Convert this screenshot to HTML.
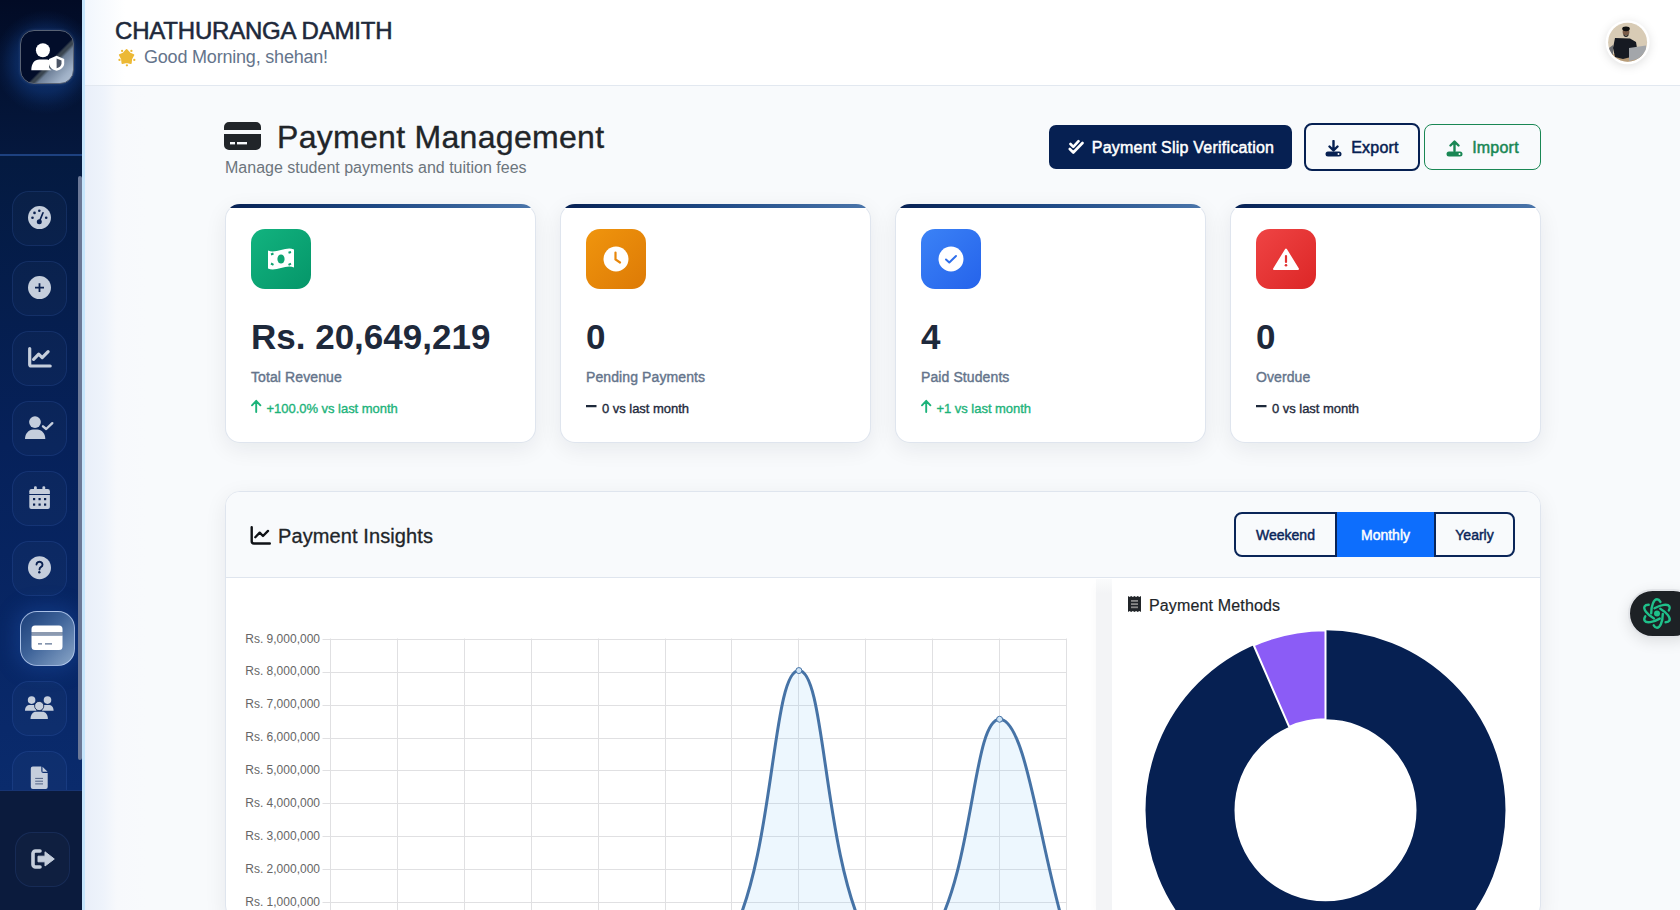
<!DOCTYPE html>
<html>
<head>
<meta charset="utf-8">
<style>
*{box-sizing:border-box;margin:0;padding:0}
html,body{width:1680px;height:910px;overflow:hidden;font-family:"Liberation Sans",sans-serif;background:#f8fafc}
.abs{position:absolute}
#sidebar{position:absolute;left:0;top:0;width:82px;height:910px;background:linear-gradient(180deg,#041838 0%,#041a40 17%,#06215a 49%,#09296a 80%,#0a2b6c 87%);overflow:hidden}
#sb-top{position:absolute;left:0;top:0;width:82px;height:155px;background:radial-gradient(circle at 46px 62px,rgba(25,85,180,.55) 0,rgba(25,85,180,.32) 30px,rgba(25,85,180,.08) 44px,rgba(25,85,180,0) 52px),linear-gradient(180deg,#020b25 0,#031232 50%,#05183e 100%)}
#sb-div{position:absolute;left:0;top:154px;width:82px;height:2px;background:#1d4180}
#sb-bottom{position:absolute;left:0;top:789.5px;width:82px;height:121px;background:#0b1b3d;border-top:1.5px solid #173472}
.logo{position:absolute;left:20px;top:30px;width:54px;height:54px;border-radius:14px;border:1.5px solid #586274;background:linear-gradient(135deg,#020d2a 0%,#020d2a 56%,#3a4550 59%,#3a4550 62%,#6e8098 66%,#9fb0c6 85%,#b4c3d6 100%);box-shadow:0 0 3px rgba(120,150,200,.3)}
.nav{position:absolute;left:12px;width:55px;height:55px;border-radius:17px;background:rgba(255,255,255,.025);border:1px solid rgba(70,120,220,.16)}
.nav svg{position:absolute;left:50%;top:50%;transform:translate(-50%,-50%)}
.nav.active{left:20px;background:linear-gradient(135deg,#1b3e78 0%,#3e6399 45%,#8aa6c8 100%);border:1px solid rgba(200,220,255,.7);box-shadow:0 0 20px 5px rgba(40,100,200,.28)}
#scroll{position:absolute;left:78px;top:176px;width:4px;height:584px;background:#6b7897;border-radius:2px}
#blue-strip{position:absolute;left:82px;top:0;width:3px;height:910px;background:#c6e5fc}
#header{position:absolute;left:85px;top:0;width:1595px;height:86px;background:linear-gradient(90deg,#f1f6fd 0,#fff 40px);border-bottom:1px solid #e2e8f0}
#main{position:absolute;left:85px;top:86px;width:1595px;height:824px;background:linear-gradient(90deg,#e9eff9 0,#eef3fb 18px,#f7f9fc 32px,#f8fafc 60px)}
.name{position:absolute;left:115px;top:17px;font-size:24px;font-weight:normal;-webkit-text-stroke:0.55px #1e293b;color:#1e293b;white-space:nowrap;letter-spacing:-0.2px}
.greet{position:absolute;left:144px;top:47px;letter-spacing:-0.2px;font-size:18px;color:#64748b;white-space:nowrap}


.title{position:absolute;left:277px;top:118.5px;letter-spacing:0.3px;-webkit-text-stroke:0.35px #212529;font-size:32px;color:#212529;white-space:nowrap}
.subtitle{position:absolute;left:225px;top:159px;font-size:16px;color:#6c757d;white-space:nowrap}
.btn{position:absolute;display:flex;align-items:center;justify-content:center;font-weight:normal;-webkit-text-stroke:0.5px currentColor;font-size:16px;letter-spacing:0.22px;white-space:nowrap;padding-top:2.5px}
.btn1{left:1049px;top:125px;width:243px;height:44px;background:#062052;color:#fff;border-radius:7px}
.btn2{left:1304px;top:123px;width:116px;height:48px;border:2px solid #062052;color:#062052;border-radius:8px;background:#f8fafc}
.btn3{left:1424px;top:124px;width:117px;height:46px;border:1px solid #198754;color:#198754;border-radius:8px;background:#f8fafc}
.card{position:absolute;top:204px;width:310.5px;height:238.5px;background:linear-gradient(90deg,#062052 0%,#1f4a86 50%,#4b76ab 100%) 0 0/100% 4px no-repeat border-box,#fff;border-radius:15px;border:1px solid #dfe5ee;border-top-color:transparent;box-shadow:0 6px 22px rgba(15,23,42,.075);overflow:hidden}
.card .ic{position:absolute;left:25px;top:24px;width:60px;height:60px;border-radius:14px}
.card .ic svg{position:absolute;left:50%;top:50%;transform:translate(-50%,-50%)}
.card .val{position:absolute;left:25px;top:112px;font-size:35px;font-weight:bold;color:#1e293b;white-space:nowrap}
.card .lbl{position:absolute;left:25px;top:164px;letter-spacing:0.1px;-webkit-text-stroke:0.4px currentColor;font-size:14px;font-weight:normal;color:#64748b;white-space:nowrap}
.card .chg{position:absolute;left:25px;top:196px;letter-spacing:-0.03px;-webkit-text-stroke:0.35px currentColor;font-size:13px;font-weight:normal;white-space:nowrap;display:flex;align-items:center}
.up{color:#1cb37a}
.flat{color:#1e293b}

.panel{position:absolute;left:225px;top:491px;width:1315.5px;height:430px;background:#fff;border-radius:15px;border:1px solid #dfe5ee;box-shadow:0 6px 22px rgba(15,23,42,.075);overflow:hidden}
.panel .ph{position:absolute;left:0;top:0;width:100%;height:86px;background:#f8fafc;border-bottom:1px solid #dfe5ee}
.ptitle{position:absolute;left:278px;top:525px;letter-spacing:0.1px;-webkit-text-stroke:0.3px #212529;font-size:20px;font-weight:normal;color:#212529;white-space:nowrap}
.tog{position:absolute;left:1234px;top:512px;width:281px;height:44.5px;display:flex}
.tog div{height:100%;display:flex;align-items:center;justify-content:center;padding-top:2px;font-size:14px;font-weight:normal;-webkit-text-stroke:0.45px currentColor;color:#0a2558;border:2px solid #0a2558;background:#f8fafc}
.tog .on{background:#0d6efd;color:#fff;border-color:#0d6efd}
.gap{position:absolute;left:1096px;top:579px;width:16px;height:340px;background:linear-gradient(180deg,#fafbfc 0,#f3f4f6 14px);box-shadow:-6px 0 8px -6px rgba(0,0,0,.04)}
.pm{position:absolute;left:1149px;top:596.5px;letter-spacing:0.15px;-webkit-text-stroke:0.2px #212529;font-size:16px;color:#212529;white-space:nowrap}
.ylab{position:absolute;font-size:12px;color:#666;white-space:nowrap;text-align:right;width:100px}
.fab{position:absolute;left:1628px;top:589px;width:70px;height:48.5px;border-radius:25px;background:#1d2125;border:2.5px solid #e2e4e8;box-shadow:0 4px 14px rgba(0,0,0,.10)}
</style>
</head>
<body>
<div id="header"></div>
<div id="main"></div>
<div id="sidebar">
  <div id="sb-top"></div>
  <div id="sb-div"></div>
  <div class="logo"></div>
  <div class="nav" style="top:191px"></div><div class="nav" style="top:261px"></div><div class="nav" style="top:331px"></div><div class="nav" style="top:401px"></div><div class="nav" style="top:471px"></div><div class="nav" style="top:541px"></div><div class="nav active" style="top:611px"></div><div class="nav" style="top:681px"></div><div class="nav" style="top:751px"></div><svg class="abs" style="left:0;top:0" width="82" height="910" viewBox="0 0 82 910"><circle cx="39.5" cy="217.6" r="11.5" fill="#c5cedc"/><g fill="#0a2150"><circle cx="39.3" cy="210.8" r="1.3"/><circle cx="34.5" cy="212.9" r="1.3"/><circle cx="32.5" cy="217.8" r="1.3"/><circle cx="46.2" cy="217.8" r="1.3"/><circle cx="39.3" cy="221.8" r="2.5"/></g><path d="M39.3 221.8L43 212.8" stroke="#0a2150" stroke-width="1.7" stroke-linecap="round"/><circle cx="39.5" cy="287.6" r="11.5" fill="#c5cedc"/><path d="M35 287.6h9M39.5 283.2v8.8" stroke="#0a2150" stroke-width="1.8"/><path d="M29.7 348.5V364.5a1.5 1.5 0 0 0 1.5 1.5H50.2" stroke="#c5cedc" stroke-width="3.2" fill="none" stroke-linecap="round"/><path d="M33.6 359.3L38.7 354.2 42.2 357.6 48.1 351.7" stroke="#c5cedc" stroke-width="3.2" fill="none" stroke-linecap="round" stroke-linejoin="round"/><circle cx="35" cy="422.1" r="5.9" fill="#c5cedc"/><path d="M25 439C25 433.5 29 429.6 33 429.6H37.5C41.5 429.6 45.3 433.5 45.3 439Z" fill="#c5cedc"/><path d="M43 426.3L46.2 429 52.3 423.2" stroke="#c5cedc" stroke-width="2.4" fill="none" stroke-linecap="round" stroke-linejoin="round"/><rect x="34" y="486.3" width="2.8" height="4" rx="1.2" fill="#c5cedc"/><rect x="42.4" y="486.3" width="2.8" height="4" rx="1.2" fill="#c5cedc"/><path d="M31.5 489h16.2a2.2 2.2 0 0 1 2.2 2.2V494H29.3v-2.8A2.2 2.2 0 0 1 31.5 489z" fill="#c5cedc"/><path d="M29.3 495H49.9V507a2 2 0 0 1-2 2H31.3a2 2 0 0 1-2-2z" fill="#c5cedc"/><g fill="#0a2150"><rect x="33" y="498" width="2.2" height="2.2"/><rect x="38.5" y="498" width="2.2" height="2.2"/><rect x="44" y="498" width="2.2" height="2.2"/><rect x="33" y="503.5" width="2.2" height="2.2"/><rect x="38.5" y="503.5" width="2.2" height="2.2"/><rect x="44" y="503.5" width="2.2" height="2.2"/></g><circle cx="39.5" cy="567.7" r="11.5" fill="#c5cedc"/><path d="M36.5 564.5a3 2.8 0 1 1 4.6 2.4c-1.3 0.8-1.6 1.3-1.6 2.6" stroke="#0a2150" stroke-width="1.9" fill="none" stroke-linecap="round"/><circle cx="39.3" cy="572.2" r="1.2" fill="#0a2150"/><circle cx="31.6" cy="700.1" r="3.8" fill="#c5cedc"/><circle cx="47.5" cy="700.1" r="3.8" fill="#c5cedc"/><path d="M25 710.7C25 707 27 705 30 705H34.5L36.5 710.7Z M53.6 710.7C53.6 707 51.6 705 48.6 705H44L42 710.7Z" fill="#c5cedc"/><circle cx="39.2" cy="706" r="4.6" fill="#c5cedc" stroke="#0a2150" stroke-width="0.8"/><path d="M30.5 719C30.5 714.5 33 711.8 36 711.8H42.4C45.4 711.8 47.9 714.5 47.9 719Z" fill="#c5cedc"/><path d="M32.8 766.6H41.3V771a2 2 0 0 0 2 2H47.7V787a2 2 0 0 1-2 2H32.8a2 2 0 0 1-2-2V768.6a2 2 0 0 1 2-2z M42.5 766.8L47.6 771.8H42.5Z" fill="#c5cedc"/><path d="M35.2 778.4H43M35.2 781.2H43M35.2 783.9H43" stroke="#0a2150" stroke-width="0.9" opacity="0.7"/></svg><svg class="abs" style="left:31px;top:625px" width="32" height="26" viewBox="0 0 32 26"><path d="M4 0.5h24a3.5 3.5 0 0 1 3.5 3.5V7H0.5V4A3.5 3.5 0 0 1 4 0.5z M0.5 10.5h31V21.5a3.5 3.5 0 0 1-3.5 3.5H4a3.5 3.5 0 0 1-3.5-3.5z" fill="#fff"/><rect x="0.5" y="7" width="31" height="3.5" fill="#8c9ab0"/><path d="M7 18.8h4M14 18.8h7" stroke="#5d7394" stroke-width="1.3"/></svg><svg class="abs" style="left:20px;top:30px" width="54" height="54" viewBox="20 30 54 54"><circle cx="42.9" cy="50.3" r="7" fill="#fff"/><path d="M31.3 70.3C31.3 63.5 34.5 59.5 39.5 59.5H47C48 59.5 48.5 59.7 49 60V66C49 68 50 69.5 51.5 70.3Z" fill="#fff"/><path d="M56.6 55.8L64.2 59V63.5C64.2 67 61 69.8 56.6 70.8C52.2 69.8 49 67 49 63.5V59Z" fill="#fff"/><path d="M56.6 58.5L61.5 60.6V63.6C61.5 65.8 59.5 67.6 56.6 68.3Z" fill="#4b5566"/></svg><div id="scroll"></div>
  <div id="sb-bottom"></div><div class="nav" style="left:15px;top:832px;background:rgba(255,255,255,.02);border-color:rgba(70,120,220,.14)"></div><svg class="abs" style="left:0;top:0" width="82" height="910" viewBox="0 0 82 910"><path d="M40 851H35.5A2.5 2.5 0 0 0 33 853.5V864.5A2.5 2.5 0 0 0 35.5 867H40" stroke="#c5cedc" stroke-width="3.6" fill="none" stroke-linecap="round"/><path d="M38 856.2H45V851.8L54.3 859 45 866V861.8H38Z" fill="#c5cedc" stroke="#c5cedc" stroke-width="1" stroke-linejoin="round"/></svg>
</div>
<div id="blue-strip"></div>

<div class="panel"><div class="ph"></div></div>
<svg class="abs" style="left:245px;top:520px" width="30" height="30" viewBox="245 520 30 30"><path d="M251.7 527.3V541.3a2.2 2.2 0 0 0 2.2 2.2H269.8" stroke="#0f1216" stroke-width="2.4" fill="none" stroke-linecap="round"/><path d="M255.3 537.2L259.7 532.6 263 536 268 530.9" stroke="#0f1216" stroke-width="2.3" fill="none" stroke-linecap="round" stroke-linejoin="round"/></svg>
<div class="ptitle">Payment Insights</div>
<div class="tog"><div style="width:103px;border-radius:8px 0 0 8px">Weekend</div><div class="on" style="width:97px">Monthly</div><div style="width:81px;border-radius:0 8px 8px 0">Yearly</div></div>
<div class="gap"></div>
<svg class="abs" style="left:1128px;top:596px" width="13" height="16" viewBox="0 0 13 16"><path d="M0 0l1.6 1 1.6-1 1.6 1 1.7-1 1.6 1 1.6-1 1.6 1 1.7-1V16l-1.7-1-1.6 1-1.6-1-1.6 1-1.7-1-1.6 1-1.6-1-1.6 1z" fill="#212529"/><rect x="3" y="4" width="7" height="1.8" fill="#888"/><rect x="3" y="7.2" width="7" height="1.8" fill="#888"/><rect x="3" y="10.4" width="7" height="1.8" fill="#888"/></svg>
<svg class="abs" style="left:0;top:0" width="1680" height="910" viewBox="0 0 1680 910"><g stroke="#e0e0e2" stroke-width="1"><line x1="322.5" y1="639.5" x2="1067" y2="639.5"/><line x1="322.5" y1="672.5" x2="1067" y2="672.5"/><line x1="322.5" y1="705.5" x2="1067" y2="705.5"/><line x1="322.5" y1="738.5" x2="1067" y2="738.5"/><line x1="322.5" y1="770.5" x2="1067" y2="770.5"/><line x1="322.5" y1="803.5" x2="1067" y2="803.5"/><line x1="322.5" y1="836.5" x2="1067" y2="836.5"/><line x1="322.5" y1="869.5" x2="1067" y2="869.5"/><line x1="322.5" y1="902.5" x2="1067" y2="902.5"/><line x1="330.5" y1="638.5" x2="330.5" y2="910"/><line x1="397.5" y1="638.5" x2="397.5" y2="910"/><line x1="464.5" y1="638.5" x2="464.5" y2="910"/><line x1="531.5" y1="638.5" x2="531.5" y2="910"/><line x1="598.5" y1="638.5" x2="598.5" y2="910"/><line x1="665.5" y1="638.5" x2="665.5" y2="910"/><line x1="731.5" y1="638.5" x2="731.5" y2="910"/><line x1="798.5" y1="638.5" x2="798.5" y2="910"/><line x1="865.5" y1="638.5" x2="865.5" y2="910"/><line x1="932.5" y1="638.5" x2="932.5" y2="910"/><line x1="999.5" y1="638.5" x2="999.5" y2="910"/><line x1="1066.5" y1="638.5" x2="1066.5" y2="910"/></g><path d="M330.50 935.40 C357.26 935.40 370.65 935.40 397.41 935.40 C424.17 935.40 437.55 935.40 464.32 935.40 C491.08 935.40 504.46 935.40 531.23 935.40 C557.99 935.40 571.37 935.40 598.14 935.40 C624.90 935.40 638.28 935.40 665.05 935.40 C691.81 935.40 721.42 956.24 731.95 935.40 C774.95 850.31 772.10 670.55 798.86 670.55 C825.63 670.55 822.78 850.31 865.77 935.40 C876.30 956.24 920.47 955.13 932.68 935.40 C973.99 868.67 972.83 719.25 999.59 719.25 C1026.35 719.25 1039.74 848.94 1066.50 935.40 L1066.50 935.4 L330.50 935.4 Z" fill="rgba(125,200,245,0.14)"/><path d="M330.50 935.40 C357.26 935.40 370.65 935.40 397.41 935.40 C424.17 935.40 437.55 935.40 464.32 935.40 C491.08 935.40 504.46 935.40 531.23 935.40 C557.99 935.40 571.37 935.40 598.14 935.40 C624.90 935.40 638.28 935.40 665.05 935.40 C691.81 935.40 721.42 956.24 731.95 935.40 C774.95 850.31 772.10 670.55 798.86 670.55 C825.63 670.55 822.78 850.31 865.77 935.40 C876.30 956.24 920.47 955.13 932.68 935.40 C973.99 868.67 972.83 719.25 999.59 719.25 C1026.35 719.25 1039.74 848.94 1066.50 935.40" fill="none" stroke="#4673a6" stroke-width="3"/><circle cx="798.86" cy="670.55" r="3" fill="#cfe4f5" stroke="#4673a6" stroke-width="1"/><circle cx="999.59" cy="719.25" r="3" fill="#cfe4f5" stroke="#4673a6" stroke-width="1"/><circle cx="1325.5" cy="810.3" r="135.5" fill="none" stroke="#062052" stroke-width="89.0"/><path d="M1253.73 645.23 A180 180 0 0 1 1325.50 630.30 L1325.50 719.30 A91 91 0 0 0 1289.21 726.85 Z" fill="#8b5cf6" stroke="#fff" stroke-width="2" stroke-linejoin="round"/></svg>
<div class="pm">Payment Methods</div>
<div class="ylab" style="left:220px;top:631.50px">Rs. 9,000,000</div>
<div class="ylab" style="left:220px;top:664.37px">Rs. 8,000,000</div>
<div class="ylab" style="left:220px;top:697.25px">Rs. 7,000,000</div>
<div class="ylab" style="left:220px;top:730.12px">Rs. 6,000,000</div>
<div class="ylab" style="left:220px;top:763.00px">Rs. 5,000,000</div>
<div class="ylab" style="left:220px;top:795.87px">Rs. 4,000,000</div>
<div class="ylab" style="left:220px;top:828.75px">Rs. 3,000,000</div>
<div class="ylab" style="left:220px;top:861.62px">Rs. 2,000,000</div>
<div class="ylab" style="left:220px;top:894.50px">Rs. 1,000,000</div>
<div class="name">CHATHURANGA DAMITH</div>
<div class="greet">Good Morning, shehan!</div>
<svg class="abs" style="left:1605px;top:20px;filter:drop-shadow(0 2px 5px rgba(0,0,0,.12))" width="45" height="45" viewBox="0 0 45 45"><defs><clipPath id="av"><circle cx="22.6" cy="22.3" r="19.5"/></clipPath></defs><circle cx="22.6" cy="22.3" r="22" fill="#fff"/><g clip-path="url(#av)"><rect width="45" height="45" fill="#d8cbb5"/><rect y="34" width="45" height="11" fill="#b89c78"/><path d="M4 40V28L8 25V40Z" fill="#6b6e73"/><path d="M10 18L25 18.5 31 22 32 28 27 28.5 26 37 18 39 10 37 8 28Z" fill="#161a22"/><path d="M24 28L41 25.5V37L24 41Z" fill="#a3a6aa"/><circle cx="21" cy="12" r="3.4" fill="#7a5c48"/><ellipse cx="21" cy="8.8" rx="3.8" ry="2.4" fill="#111"/><path d="M18.5 14Q21 17.5 23.5 14V15.5Q21 18.5 18.5 15.5Z" fill="#222"/></g></svg><svg class="abs" style="left:110px;top:42px" width="30" height="30" viewBox="110 42 30 30"><path d="M126.60 49.90 L129.54 53.15 L133.54 54.94 L131.36 58.75 L130.89 63.11 L126.60 62.20 L122.31 63.11 L121.84 58.75 L119.66 54.94 L123.66 53.15Z" fill="#ecb935" stroke="#ecb935" stroke-width="1.6" stroke-linejoin="round"/><circle cx="122.1" cy="50.9" r="1.15" fill="#ecb935"/><circle cx="131.4" cy="50.9" r="1.15" fill="#ecb935"/><circle cx="119.5" cy="59.9" r="1.15" fill="#ecb935"/><circle cx="134.3" cy="59.9" r="1.15" fill="#ecb935"/><circle cx="126.9" cy="65.3" r="1.15" fill="#ecb935"/></svg><div class="fab"></div><svg class="abs" style="left:1640px;top:596px" width="34" height="35" viewBox="-17 -17.5 34 35"><g fill="none" stroke="#1fc08a" stroke-width="2.4" stroke-linecap="round"><ellipse rx="14.3" ry="5.8" transform="rotate(90)" stroke-dasharray="4.41 12.09 20.91 12.09 16.50"/><ellipse rx="14.3" ry="5.8" transform="rotate(-30)" stroke-dasharray="4.41 12.09 20.91 12.09 16.50"/><ellipse rx="14.3" ry="5.8" transform="rotate(30)" stroke-dasharray="4.41 12.09 20.91 12.09 16.50"/></g><circle r="3" fill="#1fc08a"/></svg>

<svg class="abs" style="left:224px;top:122px" width="37" height="28" viewBox="0 0 37 28"><path d="M5 0h27a5 5 0 0 1 5 5v3H0V5a5 5 0 0 1 5-5z M0 12h37v11a5 5 0 0 1-5 5H5a5 5 0 0 1-5-5z" fill="#212529"/><rect x="6" y="20" width="5" height="2.4" fill="#f8fafc"/><rect x="13" y="20" width="10" height="2.4" fill="#f8fafc"/></svg>
<div class="title">Payment Management</div>
<div class="subtitle">Manage student payments and tuition fees</div>
<div class="btn btn1"><svg width="17" height="16" viewBox="0 0 17 16" style="margin-right:7px;margin-left:1px;margin-top:-2px"><path d="M2.5 5l2.8 2.8L10.5 2.2M1.8 10l3.5 3.5L14.5 4" stroke="#fff" stroke-width="2.6" fill="none" stroke-linecap="round" stroke-linejoin="round"/></svg>Payment Slip Verification</div>
<div class="btn btn2"><svg width="17" height="17" viewBox="0 0 17 17" style="margin-right:9px"><path d="M8.5 1v9M4.5 6.5l4 4 4-4" stroke="#062052" stroke-width="2.4" fill="none" stroke-linecap="round" stroke-linejoin="round"/><rect x="0.5" y="11.5" width="16" height="5" rx="2.5" fill="#062052"/><circle cx="13.5" cy="14" r="1" fill="#fff"/></svg>Export</div>
<div class="btn btn3"><svg width="17" height="17" viewBox="0 0 17 17" style="margin-right:9px"><path d="M8.5 11V2M4.5 5.5l4-4 4 4" stroke="#198754" stroke-width="2.4" fill="none" stroke-linecap="round" stroke-linejoin="round"/><rect x="0.5" y="11.5" width="16" height="5" rx="2.5" fill="#198754"/><circle cx="13.5" cy="14" r="1" fill="#fff"/></svg>Import</div>

<div class="card" style="left:225px">
 <div class="ic" style="background:linear-gradient(135deg,#12b37f,#059669)"><svg width="28" height="22" viewBox="0 0 28 22"><path d="M1 2.5C9 6 19 -2 27 1.5V19.5C19 16 9 24 1 20.5Z" fill="#fff"/><ellipse cx="14" cy="11" rx="3.6" ry="4.6" fill="#0ea472"/><path d="M4 6.5l2.5-1M4 15.5l2.5 1.3M21.5 4.8l2.5-0.8M21.5 16.8l2.5-1.2" stroke="#0ea472" stroke-width="2"/></svg></div>
 <div class="val">Rs. 20,649,219</div>
 <div class="lbl">Total Revenue</div>
 <div class="chg up"><svg width="11" height="14" viewBox="0 0 11 14" style="margin-right:4.5px;margin-top:-5px"><path d="M5.2 13V2.2M1 6.3l4.2-4.5 4.2 4.5" stroke="#1cb37a" stroke-width="1.9" fill="none" stroke-linecap="round" stroke-linejoin="round"/></svg>+100.0% vs last month</div>
</div>
<div class="card" style="left:560px">
 <div class="ic" style="background:linear-gradient(135deg,#f0950d,#dd7a06)"><svg width="26" height="26" viewBox="0 0 26 26"><circle cx="13" cy="13" r="12.5" fill="#fff"/><path d="M12.5 6.5v7l4.5 3" stroke="#e8870a" stroke-width="2.2" fill="none" stroke-linecap="round"/></svg></div>
 <div class="val">0</div>
 <div class="lbl">Pending Payments</div>
 <div class="chg flat"><svg width="11" height="14" viewBox="0 0 11 14" style="margin-right:5px;margin-top:-5px"><path d="M0 7.2h10.5" stroke="#1e293b" stroke-width="2.2"/></svg>0 vs last month</div>
</div>
<div class="card" style="left:895px">
 <div class="ic" style="background:linear-gradient(135deg,#3b82f6,#2563eb)"><svg width="26" height="26" viewBox="0 0 26 26"><circle cx="13" cy="13" r="12.5" fill="#fff"/><path d="M8 13.5l3.3 3L18 10" stroke="#2f6fec" stroke-width="2" fill="none" stroke-linecap="round" stroke-linejoin="round"/></svg></div>
 <div class="val">4</div>
 <div class="lbl">Paid Students</div>
 <div class="chg up"><svg width="11" height="14" viewBox="0 0 11 14" style="margin-right:4.5px;margin-top:-5px"><path d="M5.2 13V2.2M1 6.3l4.2-4.5 4.2 4.5" stroke="#1cb37a" stroke-width="1.9" fill="none" stroke-linecap="round" stroke-linejoin="round"/></svg>+1 vs last month</div>
</div>
<div class="card" style="left:1230px">
 <div class="ic" style="background:linear-gradient(135deg,#ef4444,#dc2626)"><svg width="26" height="22" viewBox="0 0 26 22"><path d="M13 1.5L25 21H1Z" fill="#fff" stroke="#fff" stroke-width="2" stroke-linejoin="round"/><path d="M13 8v6" stroke="#e23232" stroke-width="2.2" stroke-linecap="round"/><circle cx="13" cy="17.3" r="1.3" fill="#e23232"/></svg></div>
 <div class="val">0</div>
 <div class="lbl">Overdue</div>
 <div class="chg flat"><svg width="11" height="14" viewBox="0 0 11 14" style="margin-right:5px;margin-top:-5px"><path d="M0 7.2h10.5" stroke="#1e293b" stroke-width="2.2"/></svg>0 vs last month</div>
</div>

</body>
</html>
